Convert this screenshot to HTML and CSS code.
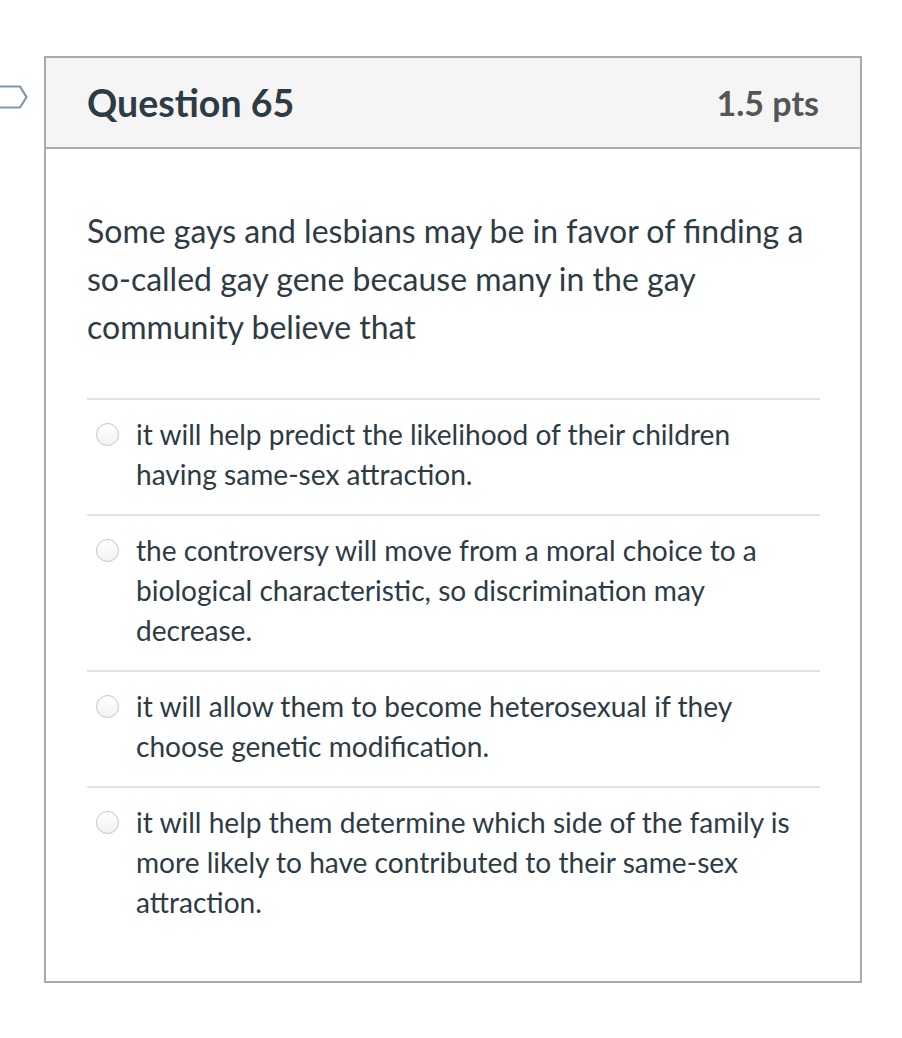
FILE: index.html
```html
<!DOCTYPE html>
<html lang="en">
<head>
<meta charset="utf-8">
<title>Question 65</title>
<link rel="stylesheet" href="styles.css">
</head>
<body>
<div class="page">
  <svg class="flag" width="30" height="30" viewBox="0 0 30 30" aria-hidden="true">
    <path d="M-3 3.5 H20 L26.5 14 L20 24.5 H-3" fill="none" stroke="#7f95a9" stroke-width="2.2" stroke-linejoin="round"/>
  </svg>
  <div class="card">
    <div class="card-header">
      <h2 class="q-title">Question 65</h2>
      <span class="q-pts">1.5 pts</span>
    </div>
    <div class="card-body">
      <p class="q-text">Some gays and lesbians may be in favor of finding a so-called gay gene because many in the gay community believe that</p>
      <div class="answers">
        <label class="answer"><span class="radio"></span><span class="a-text">it will help predict the likelihood of their children having same-sex attraction.</span></label>
        <label class="answer"><span class="radio"></span><span class="a-text">the controversy will move from a moral choice to a biological characteristic, so discrimination may decrease.</span></label>
        <label class="answer"><span class="radio"></span><span class="a-text">it will allow them to become heterosexual if they choose genetic modification.</span></label>
        <label class="answer"><span class="radio"></span><span class="a-text">it will help them determine which side of the family is more likely to have contributed to their same-sex attraction.</span></label>
      </div>
    </div>
  </div>
</div>
</body>
</html>
```

FILE: styles.css
```css
html, body {
  margin: 0;
  padding: 0;
  background: #ffffff;
}

body {
  font-family: Lato, "Open Sans", "Liberation Sans", sans-serif;
  color: #2d3b45;
}

.page {
  position: relative;
  padding: 56px 40px 0 44px;
}

.flag {
  position: absolute;
  left: 0;
  top: 83px;
}

.card {
  width: 814px;
  border: 2px solid #aaaaaa;
  background: #ffffff;
}

.card-header {
  height: 89px;
  background: #f5f5f5;
  border-bottom: 2px solid #aaaaaa;
  display: flex;
  align-items: center;
  justify-content: space-between;
  padding: 0 41px;
}

.q-title {
  margin: 0;
  font-size: 37.5px;
  font-weight: 700;
  color: #2d3b45;
}

.q-pts {
  font-size: 34px;
  font-weight: 700;
  color: #555555;
}

.card-body {
  padding: 58px 40px 39px 41px;
}

.q-text {
  margin: 0 0 47px 0;
  font-size: 32px;
  line-height: 48px;
}

.answer {
  display: flex;
  align-items: flex-start;
  border-top: 2px solid #e2e2e2;
  padding: 14px 20px 20px 0;
}

.radio {
  flex: none;
  width: 21px;
  height: 21px;
  margin: 9px 17px 0 9px;
  border: 1px solid #c4c4c4;
  border-radius: 50%;
  background: linear-gradient(#ffffff, #f2f2f2);
}

.a-text {
  font-size: 28.1px;
  line-height: 40px;
}
```
